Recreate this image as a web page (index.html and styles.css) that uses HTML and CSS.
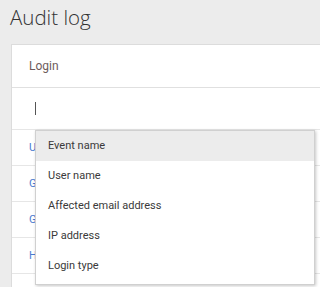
FILE: index.html
```html
<!DOCTYPE html>
<html>
<head>
<meta charset="utf-8">
<link rel="stylesheet" href="styles.css">
</head>
<body>
<div class="page">
  <h1 class="title">Audit log</h1>
  <div class="card">
    <div class="card-header">Login</div>
    <div class="filter-row"><span class="cursor"></span></div>
    <div class="row"><span class="cell">U</span></div>
    <div class="row"><span class="cell">G</span></div>
    <div class="row"><span class="cell">G</span></div>
    <div class="row"><span class="cell">H</span></div>
    <div class="row"><span class="cell"></span></div>
    <ul class="menu">
      <li class="menu-item active">Event name</li>
      <li class="menu-item">User name</li>
      <li class="menu-item">Affected email address</li>
      <li class="menu-item">IP address</li>
      <li class="menu-item">Login type</li>
    </ul>
  </div>
</div>
</body>
</html>
```

FILE: styles.css
```css
html, body {
  margin: 0;
  padding: 0;
  background: #ececec;
  font-family: Roboto, "Liberation Sans", sans-serif;
  overflow: hidden;
}
.page {
  width: 320px;
  height: 287px;
  overflow: hidden;
}
.title {
  margin: 0;
  padding: 2px 0 0 10px;
  height: 42px;
  font-family: "Open Sans", Roboto, sans-serif;
  font-size: 20.5px;
  font-weight: 300;
  line-height: 30px;
  color: #333;
}
.card {
  position: relative;
  margin-left: 11px;
  width: 340px;
  background: #fff;
  border: 1px solid #dcdcdc;
  border-right: none;
}
.card-header {
  height: 42px;
  line-height: 42px;
  padding-left: 17px;
  font-size: 12px;
  color: #6e5c5c;
  border-bottom: 1px solid #e0e0e0;
}
.filter-row {
  height: 41px;
  border-bottom: 1px solid #e6e6e6;
  display: flex;
  align-items: center;
  padding-left: 23px;
}
.cursor {
  display: block;
  width: 1px;
  height: 13px;
  background: #555;
}
.row {
  height: 35px;
  border-bottom: 1px solid #e6e6e6;
  display: flex;
  align-items: center;
  padding-left: 17px;
}
.cell {
  font-size: 11px;
  color: #4a7bd0;
}
.menu {
  position: absolute;
  left: 23px;
  top: 85px;
  width: 278px;
  margin: 0;
  padding: 0 0 3px 0;
  list-style: none;
  background: #fff;
  border: 1px solid #d0d0d0;
  box-shadow: 1px 1px 3px rgba(0, 0, 0, 0.22);
}
.menu-item {
  height: 30px;
  line-height: 30px;
  padding-left: 12px;
  font-size: 11px;
  color: #3a3a3a;
}
.menu-item.active {
  background: #ececec;
}
```
